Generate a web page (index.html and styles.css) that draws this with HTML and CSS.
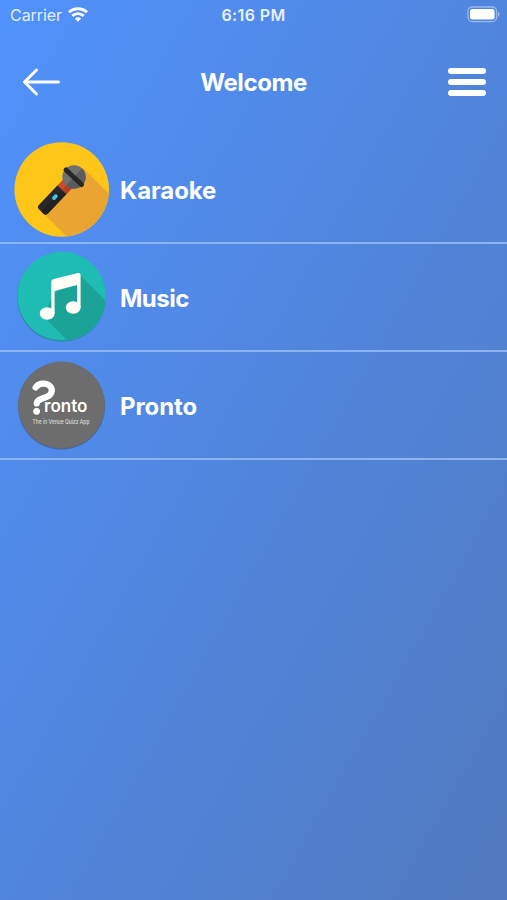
FILE: index.html
```html
<!DOCTYPE html>
<html lang="en">
<head>
<meta charset="utf-8">
<meta name="viewport" content="width=device-width, initial-scale=1">
<title>Welcome</title>
<link rel="stylesheet" href="styles.css">
</head>
<body>
<div class="status">
  <div class="status-left">
    <span class="carrier">Carrier</span>
    <svg class="wifi" width="20" height="15" viewBox="0 0 20 15" fill="none" stroke="#fff" stroke-width="2.9">
      <path d="M1 5.3C6 .5 14 .5 19 5.3"/>
      <path d="M4.3 8.9c3.2-3.1 8.2-3.1 11.4 0"/>
      <path d="M10 14.8 6.9 11.6c1.8-1.7 4.4-1.7 6.2 0z" fill="#fff" stroke="none"/>
    </svg>
  </div>
  <span class="time">6:16 PM</span>
  <svg class="battery" width="34" height="17" viewBox="0 0 34 17">
    <rect x="1" y="1" width="28.6" height="14.6" rx="4.3" fill="none" stroke="#fff" stroke-opacity=".42" stroke-width="1.3"/>
    <rect x="3" y="3" width="24.6" height="10.6" rx="2.4" fill="#fff"/>
    <path d="M31 5.8c2.2.8 2.2 4.2 0 5z" fill="#fff" fill-opacity=".42"/>
  </svg>
</div>
<header class="nav">
  <svg class="back" width="40" height="30" viewBox="0 0 40 30" fill="none" stroke="#fff" stroke-width="3" stroke-linecap="round" stroke-linejoin="round">
    <path d="M37.5 15H4M15.5 3 3.5 15l12 12"/>
  </svg>
  <h1 class="title">Welcome</h1>
  <div class="menu"><i></i><i></i><i></i></div>
</header>
<main class="list">
  <div class="row">
    <svg class="icon" width="104" height="104" viewBox="0 0 104 104">
      <defs><clipPath id="disc-k"><circle cx="51.7" cy="51.5" r="47.3"/></clipPath></defs>
      <circle cx="51.7" cy="51.5" r="47.3" fill="#fec619"/>
      <path clip-path="url(#disc-k)" d="M31 73 73 30 115 72 73 115z" fill="#e9a432"/>
      <g transform="translate(64 39) rotate(43.5)">
        <rect x="-6.2" y="15" width="12.4" height="32.5" rx="3" fill="#292929"/>
        <path d="M0 15h6.2v29.5a3 3 0 0 1-3 3H0z" fill="#212121"/>
        <rect x="-6.2" y="9" width="12.4" height="8.5" fill="#c84d2d"/>
        <path d="M0 9h6.2v8.5H0z" fill="#b34127"/>
        <circle r="11.7" fill="#717171"/>
        <path d="M0-11.7a11.7 11.7 0 0 1 0 23.4z" fill="#5c5c5c"/>
        <rect x="-13" y="-2.1" width="26" height="4.8" rx="2" fill="#272727"/>
        <rect x="-1.9" y="24.5" width="3.8" height="6.5" rx="1.9" fill="#45c5e5"/>
      </g>
    </svg>
    <span class="label karaoke">Karaoke</span>
  </div>
  <div class="row">
    <svg class="icon" width="104" height="104" viewBox="0 0 104 104">
      <defs><clipPath id="disc-m"><circle cx="51.7" cy="50" r="44.2"/></clipPath></defs>
      <circle cx="51.5" cy="51.5" r="44.5" fill="#2c8fae"/>
      <circle cx="51.7" cy="50" r="44.2" fill="#1ebcb2"/>
      <path clip-path="url(#disc-m)" d="M33 70 44 48 69 28 106 65 70 107z" fill="#1ba398"/>
      <path d="M41.3 36.5c0-2 .7-2.8 2.5-3.4l24-6c1.7-.4 2.8.3 2.8 2v33H67V39L44.6 45v23h-3.3z" fill="#fffff5"/>
      <ellipse cx="37.2" cy="67.5" rx="7.4" ry="6.2" fill="#fffff5"/>
      <ellipse cx="63.2" cy="61.5" rx="7.4" ry="6.2" fill="#fffff5"/>
    </svg>
    <span class="label music">Music</span>
  </div>
  <div class="row">
    <svg class="icon" width="104" height="104" viewBox="0 0 104 104">
      <circle cx="51.5" cy="52" r="43.7" fill="#4b6898"/>
      <circle cx="51.5" cy="51" r="43.4" fill="#6d6d6d"/>
      <path d="M25.6 33.5C29 29 35 28.6 39 31.2c4 3 3.6 8.2-.7 11C34.500 44.600 27 44.500 26.800 49.500" fill="none" stroke="#fff" stroke-width="6.2" stroke-linecap="round"/>
      <circle cx="26.6" cy="57.3" r="3.4" fill="#fff"/>
      <text class="logo-name" x="34" y="58.3" textLength="43.5" lengthAdjust="spacingAndGlyphs">ronto</text>
      <text class="logo-tag" x="22.5" y="69.5" textLength="57" lengthAdjust="spacingAndGlyphs">The in Venue Quizz App</text>
    </svg>
    <span class="label pronto">Pronto</span>
  </div>
</main>
</body>
</html>
```
FILE: styles.css
```css
* { box-sizing: border-box; }
body {
  margin: 0;
  min-height: 900px;
  color: #fff;
  font-family: Inter, "Liberation Sans", sans-serif;
  background: linear-gradient(to bottom right, #5092fc, #5179be);
}
.status {
  height: 29px;
  padding: 0 8px 0 10px;
  display: grid;
  grid-template-columns: 1fr auto 1fr;
  align-items: center;
}
.status-left { display: flex; align-items: center; gap: 6px; }
.carrier { font-size: 16px; line-height: 20px; letter-spacing: -.05px; opacity: .85; }
.time { margin-right: 2px; font-size: 16px; line-height: 20px; font-weight: 600; letter-spacing: .4px; opacity: .88; }
.battery { justify-self: end; margin-right: -2px; }
.nav {
  height: 107px;
  padding: 0 21px;
  display: grid;
  grid-template-columns: 1fr auto 1fr;
  align-items: center;
}
.back { margin-top: -2px; }
.title { margin: 1px 0 0; font-size: 24px; line-height: 30px; font-weight: 700; letter-spacing: -.4px; }
.menu { justify-self: end; width: 38px; margin-top: -2px; display: grid; gap: 5px; }
.menu i { height: 6px; border-radius: 3px; background: #fff; }
.row {
  height: 108px;
  padding: 2px 0 0 10px;
  display: flex;
  align-items: center;
  gap: 6px;
  border-bottom: 2px solid #8eb4ef;
}
.icon { flex: none; }
.label { margin-top: 2px; font-size: 24px; line-height: 30px; font-weight: 700; letter-spacing: -.1px; }
.music { letter-spacing: -.5px; }
.logo-name { font: 600 17.5px Inter, sans-serif; fill: #fff; }
.logo-tag { font: 500 5.5px Inter, sans-serif; fill: #ddd; }
```
